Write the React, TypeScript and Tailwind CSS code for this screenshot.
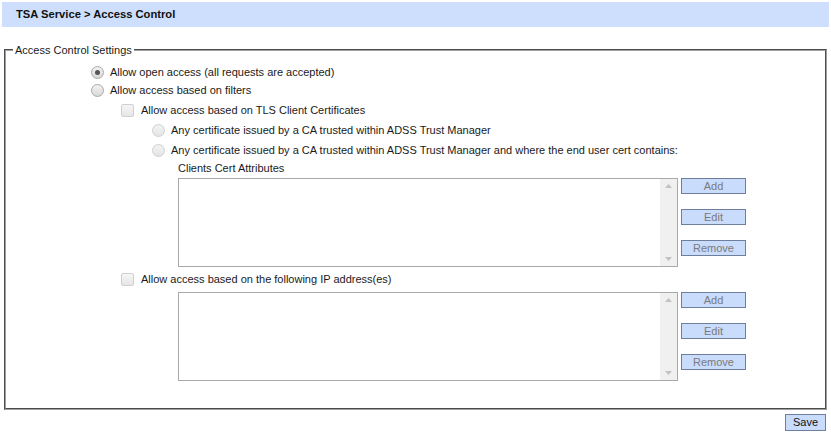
import React from "react";

const font = { fontFamily: '"Liberation Sans", Arial, sans-serif' };

function Radio({ checked = false, disabled = false }: { checked?: boolean; disabled?: boolean }) {
  return (
    <span
      className={
        "relative inline-flex h-[13px] w-[13px] shrink-0 items-center justify-center rounded-full border " +
        (disabled
          ? "border-[#d0d0d0] bg-gradient-to-b from-[#f4f4f4] to-[#e4e4e4]"
          : "border-[#a8a8a8] bg-gradient-to-b from-[#f2f2f2] to-[#d8d8d8]")
      }
    >
      {checked && <span className="h-[5px] w-[5px] rounded-full bg-[#555555]" />}
    </span>
  );
}

function Check() {
  return (
    <span className="inline-block h-[13px] w-[13px] shrink-0 rounded-[2px] border border-[#d0d0d0] bg-gradient-to-b from-[#f6f6f6] to-[#e6e6e6]" />
  );
}

function Btn({ label }: { label: string }) {
  return (
    <div className="flex h-[16px] w-[65px] items-center justify-center border border-[#6e7f9e] bg-[#c9dcfc] text-[11px] leading-none text-[#7a7a7a]">
      {label}
    </div>
  );
}

function ListBox() {
  return (
    <div className="flex items-start gap-[3px]">
      <div className="flex h-[89px] w-[500px] border border-[#a9a9a9] bg-white">
        <div className="flex-1" />
        <div className="flex w-[17px] flex-col items-center justify-between bg-[#f0f0f0] py-[5px]">
          <svg width="7" height="4" viewBox="0 0 7 4">
            <path d="M0 4 L3.5 0 L7 4 Z" fill="#c2c2c2" />
          </svg>
          <svg width="7" height="4" viewBox="0 0 7 4">
            <path d="M0 0 L3.5 4 L7 0 Z" fill="#c2c2c2" />
          </svg>
        </div>
      </div>
      <div className="flex flex-col gap-[15px]">
        <Btn label="Add" />
        <Btn label="Edit" />
        <Btn label="Remove" />
      </div>
    </div>
  );
}

export default function App() {
  return (
    <div className="h-[441px] w-[831px] bg-white text-[11px] text-[#1a1a1a]" style={font}>
      <div className="px-[2px] pt-[2px]">
        <div className="flex h-[25px] items-center bg-[#cddffc] pl-[14px] text-[11.2px] font-bold text-[#111]">
          TSA Service &gt; Access Control
        </div>
      </div>
      <fieldset className="mx-[4px] mt-[16px] h-[367px] border-2 border-[#a0a0a0] [border-style:groove]">
        <legend className="ml-[7px] px-[2px] text-[11px] leading-[14px]">Access Control Settings</legend>
        <div className="pl-[85px] pt-[6px]">
          <div className="flex h-[18px] items-center gap-[6px]">
            <Radio checked />
            <span>Allow open access (all requests are accepted)</span>
          </div>
          <div className="flex h-[18px] items-center gap-[6px]">
            <Radio />
            <span>Allow access based on filters</span>
          </div>
          <div className="pl-[30px] pt-[2px]">
            <div className="flex h-[19px] items-center gap-[7px]">
              <Check />
              <span>Allow access based on TLS Client Certificates</span>
            </div>
            <div className="pl-[31px]">
              <div className="flex h-[20px] items-center gap-[6px]">
                <Radio disabled />
                <span>Any certificate issued by a CA trusted within ADSS Trust Manager</span>
              </div>
              <div className="flex h-[20px] items-center gap-[6px]">
                <Radio disabled />
                <span>Any certificate issued by a CA trusted within ADSS Trust Manager and where the end user cert contains:</span>
              </div>
              <div className="pl-[26px]">
                <div className="flex h-[17px] items-center">Clients Cert Attributes</div>
                <div className="pt-[1px]">
                  <ListBox />
                </div>
              </div>
            </div>
            <div className="flex h-[25px] items-center gap-[7px]">
              <Check />
              <span>Allow access based on the following IP address(es)</span>
            </div>
            <div className="pl-[57px]">
              <ListBox />
            </div>
          </div>
        </div>
      </fieldset>
      <div className="flex justify-end pr-[5px] pt-[4px]">
        <div className="flex h-[17px] w-[41px] items-center justify-center border border-[#6e7f9e] bg-[#c9dcfc] text-[11px] leading-none text-[#111]">
          Save
        </div>
      </div>
    </div>
  );
}
